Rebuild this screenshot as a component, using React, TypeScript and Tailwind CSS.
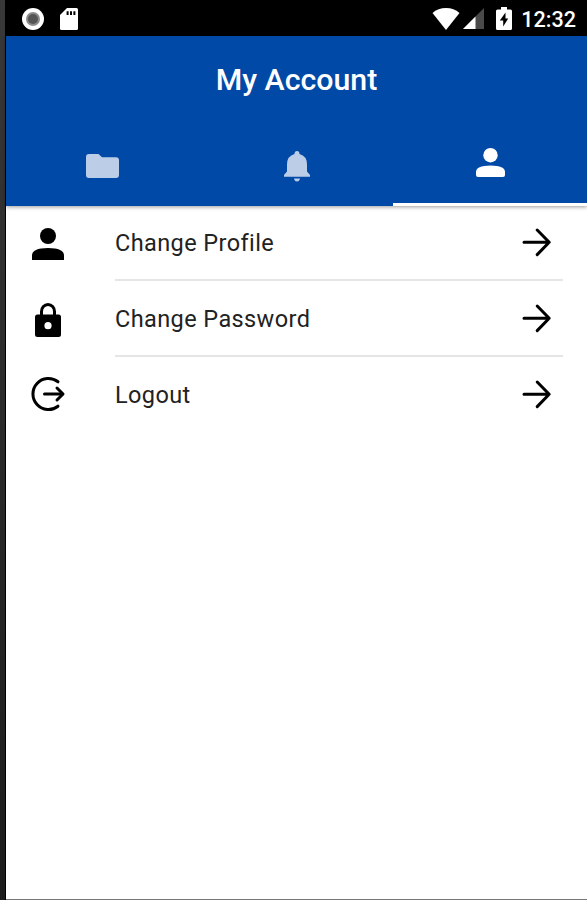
import type { ReactNode } from 'react';

const ArrowRight = () => (
    <svg className="w-[30px] h-[30px] shrink-0" viewBox="0 0 30 30" fill="none" stroke="#000" strokeWidth="3" strokeLinecap="round" strokeLinejoin="round">
        <path d="M2 15.3H27M15.2 3L27.2 15.3L15.2 27.6" />
    </svg>
);

const StatusBar = () => (
    <div className="h-9 bg-black flex items-center">
        {/* Recording indicator */}
        <svg className="w-[22px] h-[22px] ml-4 mt-px" viewBox="0 0 22 22">
            <circle cx="11" cy="11" r="11" fill="#fff" />
            <circle cx="11" cy="11" r="7" fill="#8c8c8c" />
            <circle cx="11" cy="11" r="5" fill="#555" />
        </svg>
        {/* SD card */}
        <svg className="w-[18px] h-[22px] ml-4 mt-px" viewBox="0 0 18 22">
            <path d="M7 0H16.5Q18 0 18 1.5V20.5Q18 22 16.5 22H1.5Q0 22 0 20.5V7Z" fill="#fff" />
            <path d="M6.6 3.2H8.6V7H6.6ZM10 3.2H12V7H10ZM13.4 3.2H15.4V7H13.4Z" fill="#000" />
        </svg>

        <div className="ml-auto flex items-center pr-[11px]">
            {/* Wifi */}
            <svg className="w-7 h-[22px] mt-px" viewBox="0 0 28 22">
                <path d="M14 22L0.5 5Q6 0 14 0T27.5 5Z" fill="#fff" />
            </svg>
            {/* Signal */}
            <svg className="w-[21px] h-[21px] ml-[3px] mt-px" viewBox="0 0 21 21">
                <path d="M21 0V21H0Z" fill="#4a4a4a" />
                <path d="M12.5 8.5V21H0Z" fill="#fff" />
            </svg>
            {/* Battery */}
            <svg className="w-4 h-[23px] ml-3 mt-px" viewBox="0 0 16 23">
                <path d="M5 0H11V2.5H14.5Q16 2.5 16 4V21.5Q16 23 14.5 23H1.5Q0 23 0 21.5V4Q0 2.5 1.5 2.5H5Z" fill="#fff" />
                <path d="M9.5 5.5L3.8 13.5H7.2V19.5L12.2 11.5H9.5Z" fill="#000" />
            </svg>
            <span className="ml-[9px] mt-[3px] text-[21.6px] leading-6 font-medium text-white">12:32</span>
        </div>
    </div>
);

const Header = () => (
    <header className="relative z-10 h-[170px] bg-[#0149a7] flex flex-col shadow-[0_1px_4px_rgba(0,0,0,0.4)]">
        <h1 className="h-[87px] flex items-center justify-center text-[30.3px] font-medium text-white">My Account</h1>
        <nav className="flex-1 grid grid-cols-3">
            <button className="flex justify-center items-center pt-[3px]">
                <svg className="w-[33px] h-6" viewBox="0 0 33 24">
                    <path d="M3 0H12.5L16 3.3H30Q33 3.3 33 6.3V21Q33 24 30 24H3Q0 24 0 21V3Q0 0 3 0Z" fill="#bccde7" />
                </svg>
            </button>
            <button className="flex justify-center items-center pl-px pt-[3px]">
                <svg className="w-[26px] h-[31px]" viewBox="0 0 26 31">
                    <path d="M13 0Q15.5 0 15.5 3Q23 5 23 13.5V20.5L26 24V25.8H0V24L3 20.5V13.5Q3 5 10.5 3Q10.5 0 13 0ZM10 27.5H16Q15.5 30.5 13 30.5T10 27.5Z" fill="#bccde7" />
                </svg>
            </button>
            <button className="flex justify-center items-center pb-0.5 border-b-[3px] border-white">
                <svg className="w-[29px] h-[29px]" viewBox="0 0 29 29">
                    <circle cx="14.5" cy="7.2" r="7.2" fill="#fff" />
                    <path d="M0 24Q0 17.5 14.5 17.5T29 24V27Q29 29 27 29H2Q0 29 0 27Z" fill="#fff" />
                </svg>
            </button>
        </nav>
    </header>
);

const MenuItem = ({ icon, label, divider = true }: { icon: ReactNode; label: string; divider?: boolean }) => (
    <li className="flex h-[76px] pl-6">
        <div className="w-[36px] mr-[49px] flex items-center justify-center">{icon}</div>
        <div className={`flex-1 mr-6 pr-[11px] flex items-center justify-between border-b-2 ${divider ? 'border-[#e5e5e5]' : 'border-transparent'}`}>
            <span className="pt-0.5 text-[23.5px] leading-8 tracking-[0.4px] text-[#222]">{label}</span>
            <ArrowRight />
        </div>
    </li>
);

export default function App() {
    return (
        <div className="h-[900px] flex overflow-hidden bg-white font-['Roboto',sans-serif]">
            {/* Device edge */}
            <div className="w-1.5 shrink-0 bg-gradient-to-b from-[#383838] to-[#1c1c1c] border-r border-black" />

            <div className="flex-1 flex flex-col border-b border-[#777]">
                <StatusBar />
                <Header />
                <ul className="flex-1 -mt-px">
                    <MenuItem
                        label="Change Profile"
                        icon={
                            <svg className="w-8 h-8 mt-0.5" viewBox="0 0 32 32">
                                <circle cx="16" cy="8" r="8" />
                                <path d="M0 32V27.5Q0 20 16 20T32 27.5V32Z" />
                            </svg>
                        }
                    />
                    <MenuItem
                        label="Change Password"
                        icon={
                            <svg className="w-[26px] h-[34px] mt-0.5" viewBox="0 0 26 34">
                                <path d="M6.5 13V8.5A6.5 7 0 0 1 19.5 8.5V13" fill="none" stroke="#000" strokeWidth="3" />
                                <rect y="11.5" width="26" height="22.5" rx="2.5" />
                                <circle cx="13" cy="22.7" r="3.6" fill="#fff" />
                            </svg>
                        }
                    />
                    <MenuItem
                        label="Logout"
                        divider={false}
                        icon={
                            <svg className="w-9 h-9 mb-0.5" viewBox="0 0 36 36" fill="none" stroke="#000" strokeWidth="3" strokeLinecap="round" strokeLinejoin="round">
                                <path d="M28 5.8A15.5 15.5 0 1 0 28 30.2" />
                                <path d="M14.5 18H32" />
                                <path d="M27 12L33 18L27 24" />
                            </svg>
                        }
                    />
                </ul>
            </div>
        </div>
    );
}
